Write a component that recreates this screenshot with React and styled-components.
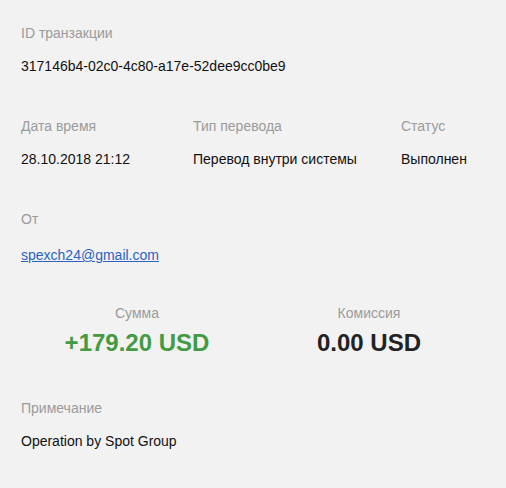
import React from "react";
import styled, { createGlobalStyle } from "styled-components";

const GlobalStyle = createGlobalStyle`
  html, body {
    margin: 0;
    padding: 0;
    background: #f2f2f2;
    font-family: "Liberation Sans", Arial, sans-serif;
  }
`;

const Page = styled.div`
  padding: 23px 21px 20px;
  background: #f2f2f2;
`;

const Section = styled.div`
  margin-bottom: ${(p) => (p.space != null ? p.space : 40)}px;
`;

const Row = styled.div`
  display: grid;
  grid-template-columns: 172px 208px 1fr;
`;

const Field = styled.div`
  display: flex;
  flex-direction: column;
  gap: ${(p) => p.gap || 13}px;
`;

const Label = styled.div`
  font-size: 14px;
  line-height: 20px;
  color: #9b9b9b;
`;

const Value = styled.div`
  font-size: 14px;
  line-height: 20px;
  color: #111;
`;

const Link = styled.a`
  font-size: 14px;
  line-height: 20px;
  color: #2a63c2;
  text-decoration: underline;
`;

const Totals = styled.div`
  display: grid;
  grid-template-columns: 1fr 1fr;
  margin-bottom: 40px;
`;

const Total = styled.div`
  display: flex;
  flex-direction: column;
  align-items: center;
  gap: 5px;
`;

const Amount = styled.div`
  font-size: 24px;
  line-height: 30px;
  font-weight: 700;
  color: ${(p) => (p.positive ? "#439a44" : "#222")};
`;

export default function App() {
  return (
    <>
      <GlobalStyle />
      <Page>
        <Section>
          <Field>
            <Label>ID транзакции</Label>
            <Value>317146b4-02c0-4c80-a17e-52dee9cc0be9</Value>
          </Field>
        </Section>

        <Section>
          <Row>
            <Field>
              <Label>Дата время</Label>
              <Value>28.10.2018 21:12</Value>
            </Field>
            <Field>
              <Label>Тип перевода</Label>
              <Value>Перевод внутри системы</Value>
            </Field>
            <Field>
              <Label>Статус</Label>
              <Value>Выполнен</Value>
            </Field>
          </Row>
        </Section>

        <Section space={38}>
          <Field gap={16}>
            <Label>От</Label>
            <div>
              <Link href="#">spexch24@gmail.com</Link>
            </div>
          </Field>
        </Section>

        <Totals>
          <Total>
            <Label>Сумма</Label>
            <Amount positive>+179.20 USD</Amount>
          </Total>
          <Total>
            <Label>Комиссия</Label>
            <Amount>0.00 USD</Amount>
          </Total>
        </Totals>

        <Section space={0}>
          <Field>
            <Label>Примечание</Label>
            <Value>Operation by Spot Group</Value>
          </Field>
        </Section>
      </Page>
    </>
  );
}
